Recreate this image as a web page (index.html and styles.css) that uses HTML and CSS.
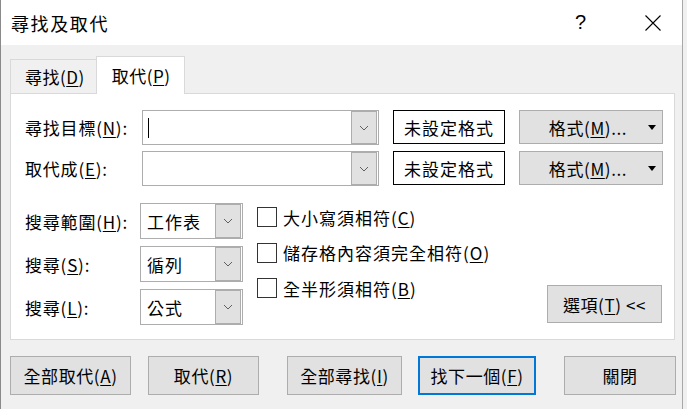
FILE: index.html
```html
<!DOCTYPE html>
<html lang="zh-Hant">
<head>
  <meta charset="UTF-8" />
  <title>尋找及取代</title>
  <link rel="stylesheet" href="styles.css">
</head>
<body>
  <div class="window">
    <div class="titlebar">
      <span class="title">尋找及取代</span>
      <span class="help">?</span>
      <span class="close">
        <svg width="16" height="16" viewBox="0 0 16 16"><path d="M0.5 0.5 L15.5 15.5 M15.5 0.5 L0.5 15.5" stroke="#000" stroke-width="1.1" fill="none"/></svg>
      </span>
    </div>

    <div class="main">
      <div class="tabs">
        <div class="tab">尋找(<u>D</u>)</div>
        <div class="tab active">取代(<u>P</u>)</div>
      </div>

      <div class="panel">
        <div class="find-grid">
          <label>尋找目標(<u>N</u>):</label>
          <div class="combo">
            <span class="caret"></span>
            <span class="drop"><svg width="10" height="6" viewBox="0 0 10 6"><path d="M1 1 L5 5 L9 1" stroke="#606060" fill="none"/></svg></span>
          </div>
          <div class="preview">未設定格式</div>
          <button class="btn fmt-btn">格式(<u>M</u>)...<svg class="tri" width="8" height="5" viewBox="0 0 8 5"><polygon points="0,0 8,0 4,5" fill="#000"/></svg></button>

          <label>取代成(<u>E</u>):</label>
          <div class="combo">
            <span class="drop"><svg width="10" height="6" viewBox="0 0 10 6"><path d="M1 1 L5 5 L9 1" stroke="#606060" fill="none"/></svg></span>
          </div>
          <div class="preview">未設定格式</div>
          <button class="btn fmt-btn">格式(<u>M</u>)...<svg class="tri" width="8" height="5" viewBox="0 0 8 5"><polygon points="0,0 8,0 4,5" fill="#000"/></svg></button>
        </div>

        <div class="options">
          <div class="scope-grid">
            <label>搜尋範圍(<u>H</u>):</label>
            <div class="select"><span class="value">工作表</span><span class="drop"><svg width="10" height="6" viewBox="0 0 10 6"><path d="M1 1 L5 5 L9 1" stroke="#606060" fill="none"/></svg></span></div>

            <label>搜尋(<u>S</u>):</label>
            <div class="select"><span class="value">循列</span><span class="drop"><svg width="10" height="6" viewBox="0 0 10 6"><path d="M1 1 L5 5 L9 1" stroke="#606060" fill="none"/></svg></span></div>

            <label>搜尋(<u>L</u>):</label>
            <div class="select"><span class="value">公式</span><span class="drop"><svg width="10" height="6" viewBox="0 0 10 6"><path d="M1 1 L5 5 L9 1" stroke="#606060" fill="none"/></svg></span></div>
          </div>

          <div class="checks">
            <div class="check"><span class="box"></span>大小寫須相符(<u>C</u>)</div>
            <div class="check"><span class="box"></span>儲存格內容須完全相符(<u>O</u>)</div>
            <div class="check"><span class="box"></span>全半形須相符(<u>B</u>)</div>
          </div>

          <button class="btn opt-btn">選項(<u>T</u>) &lt;&lt;</button>
        </div>
      </div>

      <div class="actions">
        <button class="btn a1">全部取代(<u>A</u>)</button>
        <button class="btn a2">取代(<u>R</u>)</button>
        <button class="btn a3">全部尋找(<u>I</u>)</button>
        <button class="btn a4 default">找下一個(<u>F</u>)</button>
        <button class="btn a5">關閉</button>
      </div>
    </div>
  </div>
</body>
</html>
```

FILE: styles.css
```css
body { margin: 0; width: 687px; height: 409px; background: #f0f0f0; overflow: hidden;
  font-family: "Noto Sans CJK TC", "Noto Sans", sans-serif; font-size: 17px; color: #000; }
u { text-decoration-thickness: 1px; text-underline-offset: 2px; }

.window { width: 681px; height: 409px; border-left: 1px solid #8a8a8a; border-right: 1px solid #a8a8a8; background: #f0f0f0; }

.titlebar { height: 45px; background: #fff; display: flex; align-items: center; padding-left: 10px; }
.title { font-size: 18px; letter-spacing: 1.6px; flex: 1; line-height: 1; }
.help { font-family: "Liberation Sans", sans-serif; font-size: 20px; width: 20px; margin-right: 50px; }
.close { width: 16px; height: 16px; margin-right: 21px; display: flex; }

.main { padding: 12px 0 0 9px; }

.tabs { display: flex; align-items: flex-end; height: 36px; }
.tab { height: 33px; padding: 0 11px 0 14px; border: 1px solid #d9d9d9; border-bottom: none; border-right: none;
  display: flex; align-items: center; line-height: 1; letter-spacing: 0.5px; }
.tab.active { height: 37px; margin-bottom: -1px; background: #fff; border-right: 1px solid #d9d9d9; padding: 0 14px 0 15px; position: relative; }

.panel { width: 638px; background: #fff; border: 1px solid #d9d9d9; padding: 16px 11px 14px 14px; }

.find-grid { display: grid; grid-template-columns: 103px 237px 112px 144px; grid-auto-rows: 35px;
  column-gap: 14px; row-gap: 6px; align-items: center; }
label { line-height: 1; letter-spacing: 0.8px; white-space: nowrap; }

.combo { height: 35px; box-sizing: border-box; border: 1px solid #adadad; display: flex; align-items: center; padding: 1px; position: relative; }
.caret { width: 1px; height: 20px; background: #000; margin-left: 4px; }
.drop { margin-left: auto; width: 24px; height: 31px; background: #e1e1e1; border: 1px solid #adadad;
  display: flex; align-items: center; justify-content: center; }

.preview { align-self: start; height: 34px; box-sizing: border-box; border: 1px solid #000; display: flex;
  align-items: center; justify-content: center; letter-spacing: 1px; line-height: 1; }

.btn { font: inherit; color: #000; background: #e1e1e1; border: 1px solid #adadad; box-sizing: border-box;
  display: flex; align-items: center; justify-content: center; line-height: 1; letter-spacing: 0.6px; padding: 0; }
.fmt-btn { align-self: start; height: 34px; position: relative; padding-right: 6px; }
.fmt-btn .tri { position: absolute; right: 6px; top: 14px; }

.options { display: flex; margin-top: 17px; }
.scope-grid { display: grid; grid-template-columns: 101px 103px; grid-auto-rows: 36px; column-gap: 14px; row-gap: 7px; align-items: center; }
.select { height: 36px; box-sizing: border-box; border: 1px solid #adadad; display: flex; align-items: center; padding: 1px; }
.select .value { padding-left: 5px; letter-spacing: 1px; line-height: 1; }
.select .drop { height: 32px; }

.checks { margin-left: 14px; padding-top: 4px; display: flex; flex-direction: column; gap: 15.5px; }
.check { display: flex; align-items: center; height: 20px; line-height: 1; letter-spacing: 1px; }
.box { width: 20px; height: 20px; box-sizing: border-box; border: 1px solid #333; background: #fff; margin-right: 6px; }

.opt-btn { margin-left: auto; align-self: flex-end; width: 115px; height: 38px; margin-bottom: 2px; margin-right: 1px; }

.actions { display: flex; margin-top: 16px; }
.actions .btn { height: 39px; }
.a1 { width: 121px; }
.a2 { width: 111px; margin-left: 17px; }
.a3 { width: 115px; margin-left: 28px; }
.a4 { width: 118px; margin-left: 16px; }
.a5 { width: 112px; margin-left: 28px; }
.btn.default { border: 2px solid #0078d7; }
```
